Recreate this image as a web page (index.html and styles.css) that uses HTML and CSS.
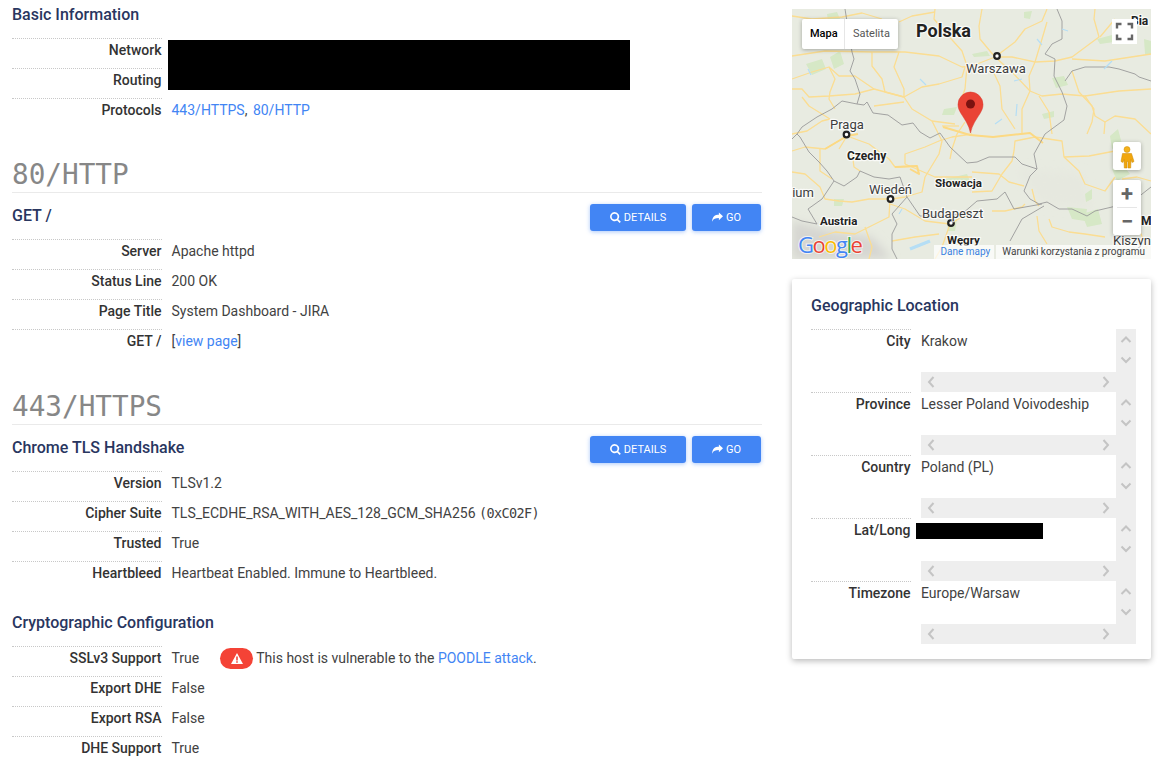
FILE: index.html
```html
<!DOCTYPE html>
<html lang="en">
<head>
<meta charset="utf-8">
<title>Host</title>
<link rel="stylesheet" href="styles.css">
</head>
<body>
<svg class="defs" width="0" height="0" aria-hidden="true">
  <symbol id="up" viewBox="0 0 20 20"><path d="M5.500 13 10 8.500 14.500 13" /></symbol>
  <symbol id="down" viewBox="0 0 20 20"><path d="M5.500 8.500 10 13 14.500 8.500" /></symbol>
  <symbol id="left" viewBox="0 0 20 20"><path d="M12.500 5 8 10 12.500 15" /></symbol>
  <symbol id="right" viewBox="0 0 20 20"><path d="M7.500 5 12 10 7.500 15" /></symbol>
  <symbol id="search" viewBox="0 0 12 12"><path d="M5 0a5 5 0 0 1 4 8l2.800 2.600-1.300 1.300L7.800 9.200A5 5 0 1 1 5 0zm0 1.800a3.200 3.200 0 1 0 0 6.400 3.200 3.200 0 0 0 0-6.400z"/></symbol>
  <symbol id="share" viewBox="0 0 12 12"><path d="M12 4.700 7.500.5v2.400C3 2.900.5 4.900 0 10.500c1.500-3.300 3.900-4 7.500-4v2.400z"/></symbol>
</svg>
<div class="page">
  <main class="left">
    <h2 class="sub first">Basic Information</h2>
    <div class="kv-group">
      <div class="kv"><div class="k">Network</div><div class="v"></div><div class="redact redact-net"></div></div>
      <div class="kv"><div class="k">Routing</div><div class="v"></div></div>
      <div class="kv"><div class="k">Protocols</div><div class="v"><a href="#">443/HTTPS</a>, <a class="next-link" href="#">80/HTTP</a></div></div>
    </div>

    <h1 class="proto proto-first">80/HTTP</h1>
    <div class="bar">
      <h2 class="sub">GET /</h2>
      <div class="btns">
        <a class="btn btn-details" href="#"><svg class="ico"><use href="#search"/></svg>Details</a>
        <a class="btn btn-go" href="#"><svg class="ico"><use href="#share"/></svg>Go</a>
      </div>
    </div>
    <div class="kv-group">
      <div class="kv"><div class="k">Server</div><div class="v">Apache httpd</div></div>
      <div class="kv"><div class="k">Status Line</div><div class="v">200 OK</div></div>
      <div class="kv"><div class="k">Page Title</div><div class="v">System Dashboard - JIRA</div></div>
      <div class="kv"><div class="k">GET /</div><div class="v">[<a href="#">view page</a>]</div></div>
    </div>

    <h1 class="proto">443/HTTPS</h1>
    <div class="bar">
      <h2 class="sub">Chrome TLS Handshake</h2>
      <div class="btns">
        <a class="btn btn-details" href="#"><svg class="ico"><use href="#search"/></svg>Details</a>
        <a class="btn btn-go" href="#"><svg class="ico"><use href="#share"/></svg>Go</a>
      </div>
    </div>
    <div class="kv-group">
      <div class="kv"><div class="k">Version</div><div class="v">TLSv1.2</div></div>
      <div class="kv"><div class="k">Cipher Suite</div><div class="v">TLS_ECDHE_RSA_WITH_AES_128_GCM_SHA256 <span class="mono">(0xC02F)</span></div></div>
      <div class="kv"><div class="k">Trusted</div><div class="v">True</div></div>
      <div class="kv"><div class="k">Heartbleed</div><div class="v">Heartbeat Enabled. Immune to Heartbleed.</div></div>
    </div>

    <h2 class="sub crypto">Cryptographic Configuration</h2>
    <div class="kv-group">
      <div class="kv"><div class="k">SSLv3 Support</div><div class="v">True<span class="pill"><svg viewBox="0 0 12 11" class="tri"><path fill-rule="evenodd" d="M6 0 12 11H0zM5.200 3.500v4h1.600v-4zM5.200 8.300v1.500h1.600V8.300z"/></svg></span>This host is vulnerable to the <a href="#">POODLE attack</a>.</div></div>
      <div class="kv"><div class="k">Export DHE</div><div class="v">False</div></div>
      <div class="kv"><div class="k">Export RSA</div><div class="v">False</div></div>
      <div class="kv"><div class="k">DHE Support</div><div class="v">True</div></div>
    </div>
  </main>

  <aside class="right">
    <div class="map">
      <svg class="map-art" viewBox="0 0 359 250" width="359" height="250">
        <defs>
          <filter id="soft" x="-20%" y="-20%" width="140%" height="140%"><feGaussianBlur stdDeviation="0.35"/></filter>
          <filter id="softer" x="-30%" y="-30%" width="160%" height="160%"><feGaussianBlur stdDeviation="5"/></filter>
        </defs>
        <rect width="359" height="250" fill="#e8ebe1"/>
        <path d="M0 212 40 222 80 228 100 250H0z" fill="#d6d6d1" filter="url(#softer)"/>
        <path d="M225 160 290 165 300 200 250 195z" fill="#e6e8df" filter="url(#softer)"/>
        <g fill="#d6e8c6" filter="url(#soft)">
          <path d="M14 55 30 50 34 60 20 66z"/><path d="M38 48 48 42 52 55 42 60z"/><path d="M232 3 240 2 238 10 232 9z"/>
          <path d="M152 100 165 98 162 106 150 106z"/><path d="M180 45 195 42 198 47 182 48z"/><path d="M260 69 272 67 276 76 264 79z"/>
          <path d="M305 30 320 26 322 33 308 35z"/><path d="M35 5 45 3 48 10 36 12z"/><path d="M320 160 330 155 338 165 325 172z"/>
          <path d="M275 198 295 200 293 212 280 210z"/><path d="M153 170 175 165 178 172 158 178z"/><path d="M155 212 165 210 163 222 156 222z"/>
          <path d="M293 185 300 180 300 190 294 193z"/><path d="M290 205 306 200 310 215 295 218z"/><path d="M42 190 52 190 50 197 42 197z"/>
          <path d="M352 30 359 32 359 45 353 45z"/><path d="M318 127 326 120 330 135 320 140z"/><path d="M250 105 262 102 262 108 252 110z"/>
        </g>
        <g class="road" filter="url(#soft)">
          <polyline points="0,47 33,42 80,43 113,43 147,47 170,58"/>
          <polyline points="0,70 20,63 37,58 47,67 63,67 82,80 112,88"/>
          <polyline points="0,80 10,80 17,88 37,87 63,85 82,80"/>
          <polyline points="10,88 17,97 38,110"/>
          <polyline points="37,58 43,70 38,83 37,90 43,100"/>
          <polyline points="80,43 80,57 90,70 93,83 112,88"/>
          <polyline points="107,43 102,58 112,80 112,88 120,100 140,112 163,115"/>
          <polyline points="112,88 130,78 147,75 170,68 173,58"/>
          <polyline points="143,0 142,10 153,23 170,42 175,57 173,80 167,97"/>
          <polyline points="0,7 20,10 50,8 70,4 90,10"/>
          <polyline points="107,13 120,7 143,3"/>
          <polyline points="82,97 112,93"/>
          <polyline points="150,117 167,117"/>
          <polyline points="170,58 180,57 203,48 223,33 233,20 250,12 255,0"/>
          <polyline points="190,0 187,17 188,30 203,48"/>
          <polyline points="203,48 220,48 243,53 263,52 280,48 307,28 302,10 303,0"/>
          <polyline points="243,53 250,30 255,13"/>
          <polyline points="280,50 313,52 359,45"/>
          <polyline points="308,28 323,10"/>
          <polyline points="203,48 220,63 238,82 250,87 270,85 293,87 327,82 359,80"/>
          <polyline points="238,82 237,67 243,53"/>
          <polyline points="238,82 230,100 230,125"/>
          <polyline points="200,60 208,77 210,100 223,120"/>
          <polyline points="280,62 287,83 300,97 303,107 313,113 323,107 343,110 359,125"/>
          <polyline points="247,87 257,103 260,125"/>
          <polyline points="293,87 302,100 300,113 295,125"/>
          <polyline points="313,113 312,125"/>
          <polyline points="222,142 223,132 243,128 270,132 272,148 287,162 293,175 313,182 323,168"/>
          <polyline points="272,148 297,147 323,142"/>
          <polyline points="180,163 207,165 217,173 232,177"/>
          <polyline points="200,202 213,202 230,198 233,195"/>
          <polyline points="180,183 200,182 210,165 220,152 222,142"/>
          <polyline points="240,180 243,192 247,197"/>
          <polyline points="257,210 260,218 277,223 293,225 313,228"/>
          <polyline points="245,207 247,222 255,235"/>
          <polyline points="0,163 13,165 28,178 33,190 47,192 60,193 77,190 98,190"/>
          <polyline points="33,140 55,127 77,135 97,150 103,158 125,157"/>
          <polyline points="0,142 13,138 33,140"/>
          <polyline points="28,140 28,162 40,170"/>
          <polyline points="55,127 47,140"/>
          <polyline points="60,143 62,158 68,162"/>
          <polyline points="113,155 113,145 133,138 147,132 160,128 180,125"/>
          <polyline points="133,168 130,183 113,188 100,190"/>
          <polyline points="98,190 97,208 77,218 63,225 43,223 27,228"/>
          <polyline points="98,195 113,200 133,212 158,215 180,202"/>
          <polyline points="158,215 150,238 143,250"/>
          <polyline points="73,218 80,238 77,250"/>
          <polyline points="100,232 123,228 147,225"/>
          <polyline points="113,155 143,168 180,168"/>
          <polyline points="173,113 165,125 160,140 158,150"/>
          <polyline points="140,112 150,132 147,145 133,168"/>
          <polyline points="0,125 15,122 30,112 38,110"/>
          <polyline points="330,170 345,168 359,172"/>
          <polyline points="343,190 345,215 355,240"/>
          <polyline class="main" points="151,118 178,126 201,128 238,124 251,134"/>
          <polyline class="main" points="33,140 55,127 66,125"/>
          <polyline class="main" points="103,158 125,157 127,165 118,160"/>
        </g>
        <g class="border" filter="url(#soft)">
          <polyline points="53,0 57,25 60,43 62,50 58,62 63,70 68,85 65,95 72,96 75,93 81,104 96,106 110,116 121,114 128,123 138,129 148,124 158,138 175,154 185,153 197,148"/>
          <polyline points="65,95 50,92 40,100 25,108 10,118 5,125 8,128 17,143 27,153 35,162 42,172 52,177 65,168 68,162 82,168 97,170 108,168 115,188 128,207 150,207 170,205 185,192 205,190 213,183 222,200 250,195"/>
          <polyline points="197,148 212,148 223,148 230,155 245,160 238,167 232,182 238,190 247,195 255,193 267,200 280,200 295,207 303,202 320,198 340,193 359,178"/>
          <polyline points="245,160 242,145 253,125 272,111 275,97 270,83 262,67 263,50 253,45 260,35 270,30 270,12 265,0"/>
          <polyline points="273,72 280,62 293,58 317,58 327,60 343,65 347,68 359,72"/>
          <polyline points="42,172 30,190 16,200 22,210 25,215 10,212 0,208"/>
          <polyline points="115,188 100,205 105,215 100,225 100,240 105,250"/>
          <polyline points="218,232 230,210 252,197"/>
          <polyline points="0,130 5,125"/>
        </g>
        <g class="water" filter="url(#soft)">
          <polyline class="lake" points="118,240 138,232"/>
          <polyline points="107,205 110,200"/><polyline points="128,70 134,76"/><polyline points="245,30 250,36"/>
          <polyline points="225,95 224,107"/><polyline points="203,115 210,110"/><polyline points="312,60 320,52"/><polyline points="222,72 230,70"/>
          <polyline points="16,60 19,66"/><polyline points="270,20 276,22"/>
        </g>
        <g class="dots">
          <circle cx="205" cy="47" r="2.800"/><circle cx="54.500" cy="125.500" r="2.800"/><circle cx="98.500" cy="190" r="2.800"/><circle cx="159" cy="214" r="2.800"/>
        </g>
        <g class="lbl">
          <text class="b l18" x="124" y="28">Polska</text>
          <text class="l13" x="174" y="64">Warszawa</text>
          <text class="l13" x="38" y="120">Praga</text>
          <text class="b l12" x="55" y="151">Czechy</text>
          <text class="l13" x="77" y="185">Wiedeń</text>
          <text class="b l11" x="143" y="178">Słowacja</text>
          <text class="l13" x="130" y="209">Budapeszt</text>
          <text class="b l11" x="28" y="216">Austria</text>
          <text class="b l11" x="155" y="235">Węgry</text>
          <text class="l13" x="0" y="188" dx="-3">iium</text>
          <text class="l13" x="321" y="236">Kiszyn</text>
          <text class="b l12" x="339" y="16">Bia</text>
          <text class="b l12" x="349" y="216">Mo</text>
        </g>
        <path d="M178.500 124C177 116 172.500 110 169 104.500 167.300 101.600 166 99 166 95.500A12.500 12.500 0 0 1 191 95.500C191 99 189.700 101.600 188 104.500 184.500 110 180 116 178.500 124Z" fill="#ea4335" stroke="#d9362b" stroke-width=".5"/>
        <circle cx="178.500" cy="95" r="4.500" fill="#7b1210"/>
        <text class="logo" x="6" y="244"><tspan fill="#4285f4">G</tspan><tspan fill="#ea4335">o</tspan><tspan fill="#fbbc05">o</tspan><tspan fill="#4285f4">g</tspan><tspan fill="#34a853">l</tspan><tspan fill="#ea4335">e</tspan></text>
      </svg>
      <div class="maptype"><span class="mt mt-on">Mapa</span><span class="mt">Satelita</span></div>
      <div class="mapctl fs"><svg viewBox="0 0 25 25" class="fs-ico"><path d="M5 9.500V5h4.500M15.500 5H20v4.500M20 15.500V20h-4.500M9.500 20H5v-4.500"/></svg></div>
      <div class="mapctl peg"><svg viewBox="0 0 28 28" class="peg-ico"><circle cx="14" cy="7.500" r="3" fill="#f5b21a" stroke="#c98807" stroke-width=".5"/><path d="M9.500 11.500h9l2.500 8-2 1-1-3-.3 8.500h-2.700v-6.500h-1V26h-2.700l-.3-8.500-1 3-2-1z" fill="#f1a60e" stroke="#c98807" stroke-width=".5"/></svg></div>
      <div class="mapctl zoom"><div class="z zp">+</div><div class="zsep"></div><div class="z zm">−</div></div>
      <div class="attr"><span class="attr-a">Dane mapy</span><span class="attr-b">Warunki korzystania z programu</span></div>
    </div>

    <section class="card">
      <h2 class="sub card-title">Geographic Location</h2>
      <div class="geo"><div class="gk">City</div><div class="gv"><div class="gt">Krakow</div><div class="sv"><svg><use href="#up"/></svg><svg><use href="#down"/></svg></div><div class="sh"><svg><use href="#left"/></svg><svg><use href="#right"/></svg></div><div class="sc"></div></div></div>
      <div class="geo"><div class="gk">Province</div><div class="gv"><div class="gt">Lesser Poland Voivodeship</div><div class="sv"><svg><use href="#up"/></svg><svg><use href="#down"/></svg></div><div class="sh"><svg><use href="#left"/></svg><svg><use href="#right"/></svg></div><div class="sc"></div></div></div>
      <div class="geo"><div class="gk">Country</div><div class="gv"><div class="gt">Poland (PL)</div><div class="sv"><svg><use href="#up"/></svg><svg><use href="#down"/></svg></div><div class="sh"><svg><use href="#left"/></svg><svg><use href="#right"/></svg></div><div class="sc"></div></div></div>
      <div class="geo"><div class="gk">Lat/Long</div><div class="gv"><div class="gt"></div><div class="sv"><svg><use href="#up"/></svg><svg><use href="#down"/></svg></div><div class="sh"><svg><use href="#left"/></svg><svg><use href="#right"/></svg></div><div class="sc"></div></div><div class="redact redact-geo"></div></div>
      <div class="geo"><div class="gk">Timezone</div><div class="gv"><div class="gt">Europe/Warsaw</div><div class="sv"><svg><use href="#up"/></svg><svg><use href="#down"/></svg></div><div class="sh"><svg><use href="#left"/></svg><svg><use href="#right"/></svg></div><div class="sc"></div></div></div>
    </section>
  </aside>
</div>
</body>
</html>
```
FILE: styles.css
```css
* { box-sizing: border-box; }
html, body { margin: 0; height: 765px; overflow: hidden; background: #fff; }
body { font: 14px/20px Roboto, "Liberation Sans", sans-serif; color: #424242; }
a { color: #4285f4; text-decoration: none; }
.next-link { margin-left: 2px; }
.defs { position: absolute; }
.page { display: flex; gap: 30px; padding: 0 8px 0 12px; }
.left { width: 750px; flex: none; }
.right { width: 359px; flex: none; padding-top: 9px; }

.sub { margin: 0; font-size: 16px; line-height: 20px; font-weight: 500; color: #29365f; }
.first { padding-top: 5px; margin-bottom: 13px; }
.kv-group { display: flex; flex-direction: column; }
.kv { position: relative; display: grid; grid-template-columns: 149.500px 1fr; column-gap: 10px; height: 30px; }
.k { border-top: 1px dotted #c8c8c8; padding-top: 1px; text-align: right; font-weight: 500; color: #333; }
.v { padding-top: 2px; }
.redact { position: absolute; background: #000; }
.redact-net { left: 156px; top: 2px; width: 462px; height: 50px; }

.proto { margin: 27px 0 0; font: 400 27.700px/36px "DejaVu Sans Mono", monospace; color: #878787; border-bottom: 1px solid #eaeaea; padding: 3px 0 0; height: 39px; }
.proto-first { margin-top: 26px; }
.bar { display: flex; justify-content: space-between; align-items: flex-start; padding-top: 11px; height: 46px; }
.bar .sub { padding-top: 2px; }
.btns { display: flex; gap: 6px; padding-right: 1px; }
.btn { display: flex; align-items: center; justify-content: center; height: 27px; border-radius: 3px; background: #4285f4; color: #fff; font-size: 11px; text-transform: uppercase; box-shadow: 0 1px 4px rgba(66,133,244,.45); }
.btn-details { width: 96px; }
.btn-go { width: 69px; }
.ico { width: 11px; height: 11px; fill: #fff; margin-right: 3px; }
.crypto { margin-top: 22px; margin-bottom: 13px; }
.mono { font: 13.500px "DejaVu Sans Mono", monospace; letter-spacing: -.63px; }
.pill { display: inline-flex; align-items: center; justify-content: center; vertical-align: middle; width: 33px; height: 21px; border-radius: 11px; background: #f44336; margin: -2px 3px 0 21px; }
.tri { width: 12px; height: 11px; fill: #fff; }

.map { position: relative; width: 359px; height: 250px; overflow: hidden; }
.map-art { display: block; }
.road polyline { fill: none; stroke: #fbdd92; stroke-width: 1.300; stroke-linejoin: round; }
.road .main { stroke: #fcd983; stroke-width: 2; }
.border polyline { fill: none; stroke: #9a9a9a; stroke-width: .9; stroke-linejoin: round; }
.water polyline { fill: none; stroke: #b5def5; stroke-width: 1.200; }
.water .lake { stroke-width: 3.500; }
.dots circle { fill: #fff; stroke: #222; stroke-width: 2.200; }
.lbl text { font-family: Roboto, sans-serif; fill: #3d3d3d; stroke: #fff; stroke-width: 2.500; stroke-opacity: .75; paint-order: stroke; stroke-linejoin: round; }
.lbl .b { font-weight: 700; fill: #222; }
.l18 { font-size: 18px; }
.l13 { font-size: 13px; }
.l12 { font-size: 12px; }
.l11 { font-size: 11.500px; }
.logo { font: 500 22px "Open Sans", Roboto, sans-serif; letter-spacing: -1.500px; stroke: #fff; stroke-width: 2; stroke-opacity: .7; paint-order: stroke; }
.maptype { position: absolute; left: 10px; top: 10px; display: flex; height: 30px; background: #fff; border-radius: 2px; box-shadow: 0 1px 4px rgba(0,0,0,.3); font-size: 11px; }
.mt { display: flex; align-items: center; padding: 0 8px; color: #565656; }
.mt-on { color: #000; font-weight: 500; border-right: 1px solid #e6e6e6; width: 43px; }
.mapctl { position: absolute; background: #fff; border-radius: 2px; box-shadow: 0 1px 4px rgba(0,0,0,.3); }
.fs { left: 320px; top: 10px; width: 25px; height: 25px; border-radius: 0; box-shadow: none; }
.fs-ico { display: block; fill: none; stroke: #666; stroke-width: 2.400; }
.peg { left: 321px; top: 133px; width: 28px; height: 28px; }
.peg-ico { display: block; }
.zoom { left: 321px; top: 171px; width: 28px; height: 55px; display: flex; flex-direction: column; align-items: center; }
.z { height: 27px; width: 28px; display: flex; align-items: center; justify-content: center; font: 700 22px/27px Roboto, sans-serif; color: #666; }
.zp { padding-bottom: 1px; }
.zsep { width: 20px; height: 1px; background: #e6e6e6; flex: none; }
.attr { position: absolute; right: 0; bottom: 0; height: 14px; display: flex; font-size: 10px; line-height: 14px; gap: 2px; }
.attr-a, .attr-b { background: rgba(255,255,255,.72); padding: 0 6px; color: #444; white-space: nowrap; }
.attr-a { color: #3b82e0; padding: 0 4px 0 6px; }

.card { margin-top: 20px; height: 380px; padding: 17px 15px 15px 19px; background: #fff; border-radius: 2px; box-shadow: 0 2px 6px rgba(0,0,0,.28); }
.card-title { margin-bottom: 13px; line-height: 20px; }
.geo { position: relative; display: grid; grid-template-columns: 99.500px 215px; column-gap: 10.500px; height: 63px; }
.gk { border-top: 1px dotted #c8c8c8; padding-top: 1px; text-align: right; font-weight: 500; color: #333; }
.gv { display: grid; grid-template-columns: 195px 20px; grid-template-rows: 43px 20px; }
.gt { padding-top: 2px; }
.sv { background: #eee; display: flex; flex-direction: column; }
.sh { background: #eee; display: flex; justify-content: space-between; }
.sc { background: #eee; }
.sv svg, .sh svg { width: 20px; height: 20px; fill: none; stroke: #c4c4c4; stroke-width: 2; }
.redact-geo { left: 105px; top: 5px; width: 127px; height: 16px; }
```
